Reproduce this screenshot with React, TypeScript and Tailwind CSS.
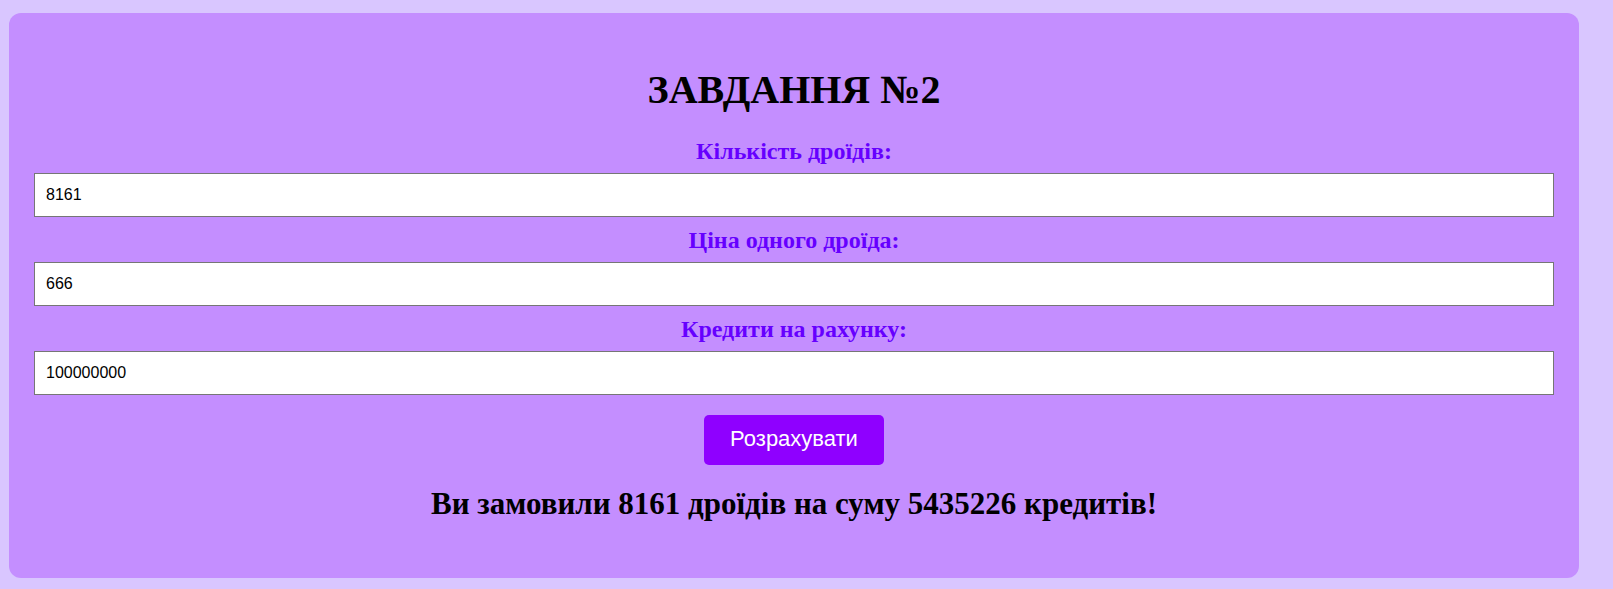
import { useState } from "react";

const serif = { fontFamily: '"Liberation Serif", "Times New Roman", serif' };

const fields = [
  { label: "Кількість дроїдів:", key: "count" },
  { label: "Ціна одного дроїда:", key: "price" },
  { label: "Кредити на рахунку:", key: "credits" },
] as const;

const App = () => {
  const [values, setValues] = useState({
    count: "8161",
    price: "666",
    credits: "100000000",
  });

  return (
    <div className="min-h-screen bg-[#d9c6ff] pt-[13px] pb-[13px] pl-[9px]">
      <div className="w-[1570px] rounded-[12px] bg-[#c48eff] px-[25px] pt-[53px] pb-[57px] flex flex-col items-center">
        {/* Title */}
        <h1 className="text-[40px] leading-[48px] font-bold text-black" style={serif}>
          ЗАВДАННЯ №2
        </h1>

        {/* Inputs */}
        <div className="w-full mt-[24px] flex flex-col">
          {fields.map((f, i) => (
            <div key={f.key} className={i === 0 ? "flex flex-col items-center" : "flex flex-col items-center mt-[10px]"}>
              <label
                className="text-[24px] leading-[27px] font-bold text-[#6600ff]"
                style={serif}
              >
                {f.label}
              </label>
              <input
                type="text"
                value={values[f.key]}
                onChange={(e) => setValues({ ...values, [f.key]: e.target.value })}
                className="mt-[8px] w-full h-[44px] border border-[#767676] bg-white px-[11px] text-[16px] text-black outline-none font-['Liberation_Sans',Arial,sans-serif]"
              />
            </div>
          ))}
        </div>

        {/* Button */}
        <button className="mt-[20px] w-[180px] h-[50px] rounded-[5px] bg-[#8f00ff] text-white text-[22px] leading-[26px] pb-[3px] font-['Liberation_Sans',Arial,sans-serif]">
          Розрахувати
        </button>

        {/* Result */}
        <h2 className="mt-[22px] text-[31px] leading-[34px] font-bold text-black" style={serif}>
          Ви замовили 8161 дроїдів на суму 5435226 кредитів!
        </h2>
      </div>
    </div>
  );
};

export default App;
